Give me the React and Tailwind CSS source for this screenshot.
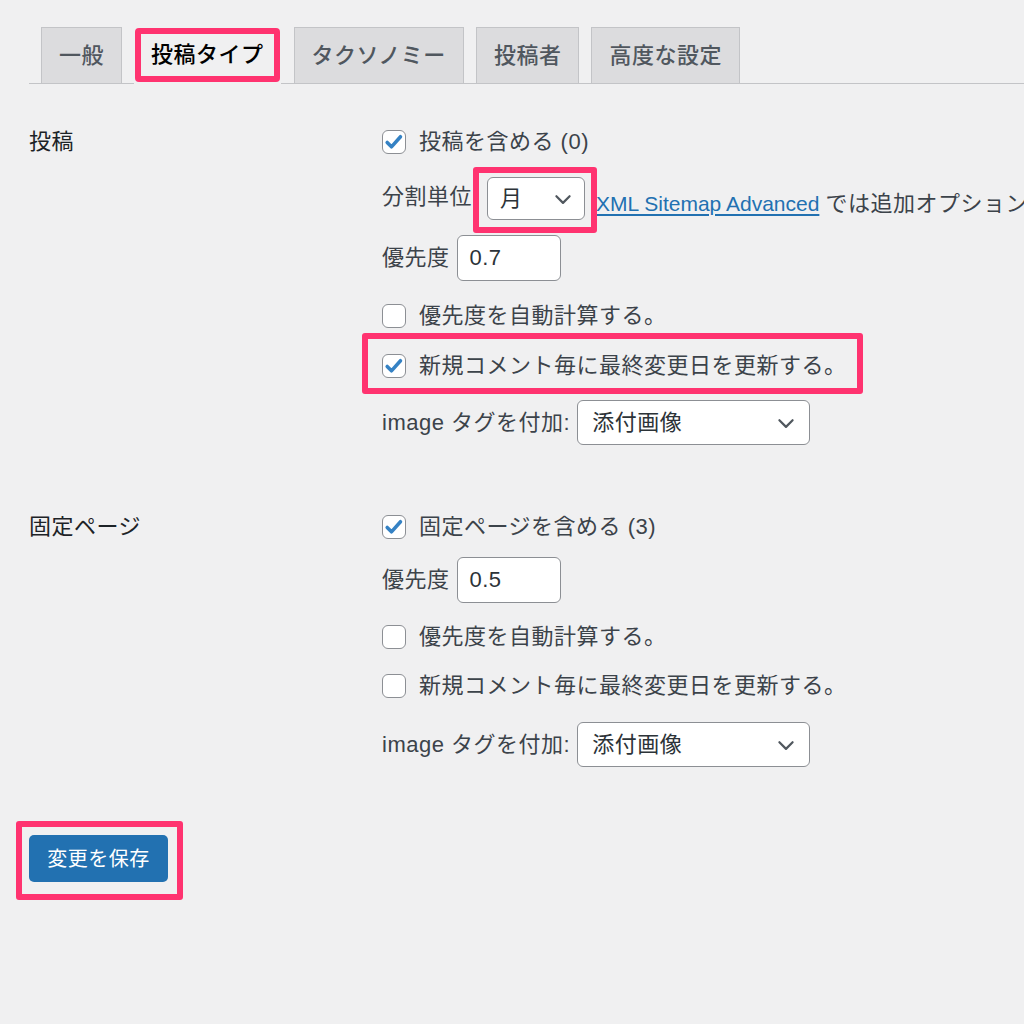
import React from 'react';

const FONT = { fontFamily: '"Liberation Sans", "Noto Sans CJK JP", sans-serif' };
const PINK = 'border-[#ff3370]';

const Chevron = ({ className }) => (
  <svg viewBox="0 0 20 20" className={className} fill="none">
    <path d="M4 7.5l6 6 6-6" stroke="#50575e" strokeWidth="2" strokeLinecap="round" strokeLinejoin="round" />
  </svg>
);

const Checkbox = ({ checked }) => (
  <span className="w-[24px] h-[24px] shrink-0 rounded-[6px] border border-[#8c8f94] bg-white flex items-center justify-center">
    {checked && (
      <svg viewBox="0 0 20 20" className="w-[22px] h-[22px]">
        <path d="M3.8 10.4l3.9 4 8.2-9.2" stroke="#3582c4" strokeWidth="3.2" fill="none" strokeLinecap="round" strokeLinejoin="round" />
      </svg>
    )}
  </span>
);

const CheckRow = ({ checked, children, className = '' }) => (
  <div className={`h-[30px] flex items-center gap-[13px] ${className}`}>
    <Checkbox checked={checked} />
    <span className="whitespace-nowrap">{children}</span>
  </div>
);

const Tab = ({ children, className = 'ml-[12px]' }) => (
  <div className={`${className} h-[56px] px-[17px] flex items-center border border-b-0 border-[#c3c4c7] bg-[#dcdcde] text-[#50575e] font-medium`}>
    {children}
  </div>
);

const PriorityRow = ({ value, className = '' }) => (
  <div className={`flex items-center gap-[7px] ${className}`}>
    <span>優先度</span>
    <div className="w-[104px] h-[46px] rounded-[6px] border border-[#8c8f94] bg-white flex items-center pl-[12px] text-[#2c3338]">
      {value}
    </div>
  </div>
);

const ImageRow = ({ className = '' }) => (
  <div className={`flex items-center gap-[7px] ${className}`}>
    <span className="whitespace-nowrap">image タグを付加:</span>
    <div className="w-[233px] h-[45px] rounded-[6px] border border-[#8c8f94] bg-white flex items-center justify-between pl-[14px] pr-[12px] text-[#2c3338]">
      <span>添付画像</span>
      <Chevron className="w-[22px] h-[22px]" />
    </div>
  </div>
);

export default function App() {
  return (
    <div style={FONT} className="w-full h-[1024px] overflow-hidden bg-[#f0f0f1] pt-[27px] pl-[29px] text-[22px] tracking-[0.5px] text-[#3c434a] leading-[30px]">
      <nav className="flex items-end border-b border-[#c3c4c7] pl-[12px]">
        <Tab className="ml-0">一般</Tab>
        <div className="ml-[12px] mb-[-1px] h-[57px] bg-[#f0f0f1] px-[1px] pt-[1px] pb-[2px]">
          <div className={`h-[54px] border-[6px] ${PINK} rounded-[4px] px-[10px] flex items-center text-black font-medium`}>
            投稿タイプ
          </div>
        </div>
        <Tab className="ml-[13px]">タクソノミー</Tab>
        <Tab>投稿者</Tab>
        <Tab>高度な設定</Tab>
      </nav>

      <section className="mt-[43px] grid grid-cols-[353px_1fr]">
        <div className="h-[30px] flex items-center text-[#1d2327]">投稿</div>
        <div className="flex flex-col items-start">
          <CheckRow checked>投稿を含める (0)</CheckRow>
          <div className="mt-[20px] flex items-center whitespace-nowrap">
            <span className="mb-[4px]">分割単位</span>
            <div className="relative ml-[15px]">
              <span className={`absolute -left-[14px] -right-[12px] -top-[10px] -bottom-[13px] border-[6px] ${PINK} rounded-[3px]`} />
              <div className="w-[98px] h-[43px] rounded-[6px] border border-[#8c8f94] bg-white flex items-center justify-between pl-[12px] pr-[10px] text-[#2c3338]">
                <span>月</span>
                <Chevron className="w-[22px] h-[22px]" />
              </div>
            </div>
            <span className="mt-[10px] ml-[11px]">
              <a className="text-[21px] tracking-normal text-[#2271b1] underline underline-offset-[3px]">XML Sitemap Advanced</a>
              <span className="ml-[6px]">では追加オプションが利用可能です。</span>
            </span>
          </div>
          <PriorityRow value="0.7" className="mt-[15px]" />
          <CheckRow checked={false} className="mt-[20px]">優先度を自動計算する。</CheckRow>
          <div className="relative mt-[20px]">
            <span className={`absolute -left-[20px] -right-[16px] -top-[18px] -bottom-[13px] border-[6px] ${PINK} rounded-[3px]`} />
            <CheckRow checked>新規コメント毎に最終変更日を更新する。</CheckRow>
          </div>
          <ImageRow className="mt-[19px]" />
        </div>
      </section>

      <section className="mt-[67px] grid grid-cols-[353px_1fr]">
        <div className="h-[30px] flex items-center text-[#1d2327]">固定ページ</div>
        <div className="flex flex-col items-start">
          <CheckRow checked>固定ページを含める (3)</CheckRow>
          <PriorityRow value="0.5" className="mt-[15px]" />
          <CheckRow checked={false} className="mt-[19px]">優先度を自動計算する。</CheckRow>
          <CheckRow checked={false} className="mt-[19px]">新規コメント毎に最終変更日を更新する。</CheckRow>
          <ImageRow className="mt-[21px]" />
        </div>
      </section>

      <div className="relative mt-[68px] w-[139px]">
        <span className={`absolute -left-[13px] -right-[15px] -top-[14px] -bottom-[18px] border-[6px] ${PINK} rounded-[3px]`} />
        <button className="relative w-[139px] h-[47px] rounded-[5px] bg-[#2271b1] text-white text-[20px]">
          変更を保存
        </button>
      </div>
    </div>
  );
}
